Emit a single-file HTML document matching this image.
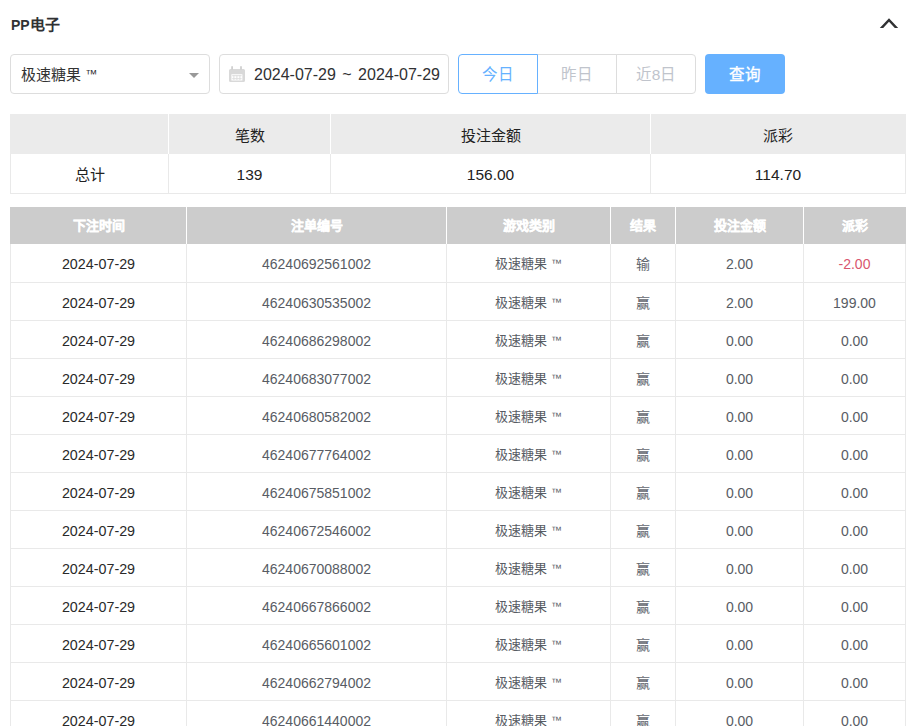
<!DOCTYPE html>
<html lang="zh-CN"><head><meta charset="utf-8">
<style>
*{box-sizing:border-box;margin:0;padding:0}
html,body{width:907px;height:726px;overflow:hidden;background:#fff}
body{font-family:"Liberation Sans",sans-serif;font-size:14px;color:#606266;position:relative}
.abs{position:absolute}
.title .tc{font-size:15px}
.title{left:11px;top:16px;font-size:14px;font-weight:bold;color:#303133;line-height:18px}
.chev{left:878px;top:16px;width:22px;height:14px}
.sel{left:10px;top:54px;width:200px;height:40px;border:1px solid #dddddd;border-radius:4px}
.sel .t{position:absolute;left:10px;top:1px;line-height:38px;font-size:15px;color:#333;white-space:nowrap}
.sel .t .tm{font-size:12px;position:relative;top:-2px}
.sel .arr{position:absolute;left:178px;top:18px;width:0;height:0;border-left:5px solid transparent;border-right:5px solid transparent;border-top:5px solid #999}
.date{left:219px;top:54px;width:230px;height:40px;border:1px solid #dddddd;border-radius:4px}
.date .t{position:absolute;left:34px;top:1px;line-height:38px;font-size:16px;color:#303133;white-space:nowrap;word-spacing:2px}
.date svg{position:absolute;left:9px;top:11px}
.grp{left:458px;top:54px;width:238px;height:40px}
.btn{position:absolute;top:0;height:40px;border:1px solid #dddddd;text-align:center;line-height:40px;font-size:15.5px;color:#c0c4cc;background:#fff}
.b1{left:0;width:80px;border-color:#66b1ff;color:#66b1ff;border-radius:4px 0 0 4px;z-index:2}
.b2{left:79px;width:80px}
.b3{left:158px;width:80px;border-radius:0 4px 4px 0}
.q{left:705px;top:54px;width:80px;height:40px;background:#66b1ff;border-radius:4px;color:#fff;text-align:center;line-height:42px;font-size:15.5px;-webkit-text-stroke:0.35px #fff}
table{border-collapse:collapse;table-layout:fixed;position:absolute}
td,th{text-align:center;overflow:hidden;white-space:nowrap;padding:0}
.sum{left:10px;top:114px;width:895px}
.sum th{height:40px;background:#ebebeb;font-weight:normal;color:#222;border-left:1px solid #fff;border-right:1px solid #fff;font-size:15px;padding-top:3px;line-height:37px;vertical-align:top}
.sum td{height:39px;border:1px solid #e9e9e9;border-top:0;color:#222;font-size:15.5px;padding-top:3px;line-height:35px;vertical-align:top}
.data{left:10px;top:207px;width:895px}
.data th{height:37px;background:#cccccc;color:#fff;font-weight:bold;font-size:13px;-webkit-text-stroke:0.3px #fff;border-left:1px solid #fff;border-right:1px solid #fff;padding-top:1px;line-height:36px;vertical-align:top}
.data td{height:38px;border:1px solid #e9e9e9;border-top:0;color:#585c64;padding-top:10px;line-height:20px;vertical-align:top}
.data td.d{color:#2a2a2a;font-size:14.3px}
.data .cj{font-size:13px;position:relative;top:-1px}
.data .tm{font-size:11px;position:relative;top:-2px}
.sum th:first-child{border-left-color:#ebebeb}.sum th:last-child{border-right-color:#ebebeb}
.data th:first-child{border-left-color:#ccc}.data th:last-child{border-right-color:#ccc}
.data td.r{color:#62666e}
.red{color:#d9566e !important}
</style></head><body>
<div class="abs title">PP<span class="tc">电子</span></div>
<svg class="abs chev" viewBox="878 16 22 14"><path d="M879.8 28 L889 18.2 L898.2 28 L894.8 28 L889 21.8 L883.2 28 Z" fill="#303133"/></svg>
<div class="abs sel"><span class="t">极速糖果 <span class="tm">™</span></span><span class="arr"></span></div>
<div class="abs date"><svg width="17" height="17" viewBox="0 0 17 17"><path d="M1.5 3H14.5A1.5 1.5 0 0 1 16 4.5V14.5A1.5 1.5 0 0 1 14.5 16H1.5A1.5 1.5 0 0 1 0 14.5V4.5A1.5 1.5 0 0 1 1.5 3Z M2.4 8.2H13.4V14.4H2.4Z" fill="#d9d9d9" fill-rule="evenodd"/><rect x="2.2" y="0" width="1.8" height="4" rx="0.9" fill="#d0d0d0"/><rect x="11.1" y="0" width="1.8" height="4" rx="0.9" fill="#d0d0d0"/><path d="M3.2 9.7H12.6M3.2 12.7H12.6M4.9 9.2V14M7.9 9.2V14M10.9 9.2V14" stroke="#dedede" stroke-width="1" fill="none"/></svg><span class="t">2024-07-29 ~ 2024-07-29</span></div>
<div class="abs grp"><div class="btn b1">今日</div><div class="btn b2">昨日</div><div class="btn b3">近8日</div></div>
<div class="abs q">查询</div>
<table class="sum">
<colgroup><col style="width:158px"><col style="width:162px"><col style="width:320px"><col style="width:255px"></colgroup>
<tr><th></th><th>笔数</th><th>投注金额</th><th>派彩</th></tr>
<tr><td><span style="font-size:15px">总计</span></td><td>139</td><td>156.00</td><td>114.70</td></tr>
</table>
<table class="data">
<colgroup><col style="width:176px"><col style="width:260px"><col style="width:164px"><col style="width:65px"><col style="width:128px"><col style="width:102px"></colgroup>
<tr><th>下注时间</th><th>注单编号</th><th>游戏类别</th><th>结果</th><th>投注金额</th><th>派彩</th></tr>
<tr><td class="d">2024-07-29</td><td>46240692561002</td><td class="g"><span class="cj">极速糖果</span> <span class="tm">™</span></td><td class="r">输</td><td>2.00</td><td class="red">-2.00</td></tr>
<tr><td class="d">2024-07-29</td><td>46240630535002</td><td class="g"><span class="cj">极速糖果</span> <span class="tm">™</span></td><td class="r">赢</td><td>2.00</td><td>199.00</td></tr>
<tr><td class="d">2024-07-29</td><td>46240686298002</td><td class="g"><span class="cj">极速糖果</span> <span class="tm">™</span></td><td class="r">赢</td><td>0.00</td><td>0.00</td></tr>
<tr><td class="d">2024-07-29</td><td>46240683077002</td><td class="g"><span class="cj">极速糖果</span> <span class="tm">™</span></td><td class="r">赢</td><td>0.00</td><td>0.00</td></tr>
<tr><td class="d">2024-07-29</td><td>46240680582002</td><td class="g"><span class="cj">极速糖果</span> <span class="tm">™</span></td><td class="r">赢</td><td>0.00</td><td>0.00</td></tr>
<tr><td class="d">2024-07-29</td><td>46240677764002</td><td class="g"><span class="cj">极速糖果</span> <span class="tm">™</span></td><td class="r">赢</td><td>0.00</td><td>0.00</td></tr>
<tr><td class="d">2024-07-29</td><td>46240675851002</td><td class="g"><span class="cj">极速糖果</span> <span class="tm">™</span></td><td class="r">赢</td><td>0.00</td><td>0.00</td></tr>
<tr><td class="d">2024-07-29</td><td>46240672546002</td><td class="g"><span class="cj">极速糖果</span> <span class="tm">™</span></td><td class="r">赢</td><td>0.00</td><td>0.00</td></tr>
<tr><td class="d">2024-07-29</td><td>46240670088002</td><td class="g"><span class="cj">极速糖果</span> <span class="tm">™</span></td><td class="r">赢</td><td>0.00</td><td>0.00</td></tr>
<tr><td class="d">2024-07-29</td><td>46240667866002</td><td class="g"><span class="cj">极速糖果</span> <span class="tm">™</span></td><td class="r">赢</td><td>0.00</td><td>0.00</td></tr>
<tr><td class="d">2024-07-29</td><td>46240665601002</td><td class="g"><span class="cj">极速糖果</span> <span class="tm">™</span></td><td class="r">赢</td><td>0.00</td><td>0.00</td></tr>
<tr><td class="d">2024-07-29</td><td>46240662794002</td><td class="g"><span class="cj">极速糖果</span> <span class="tm">™</span></td><td class="r">赢</td><td>0.00</td><td>0.00</td></tr>
<tr><td class="d">2024-07-29</td><td>46240661440002</td><td class="g"><span class="cj">极速糖果</span> <span class="tm">™</span></td><td class="r">赢</td><td>0.00</td><td>0.00</td></tr>
</table>
</body></html>
